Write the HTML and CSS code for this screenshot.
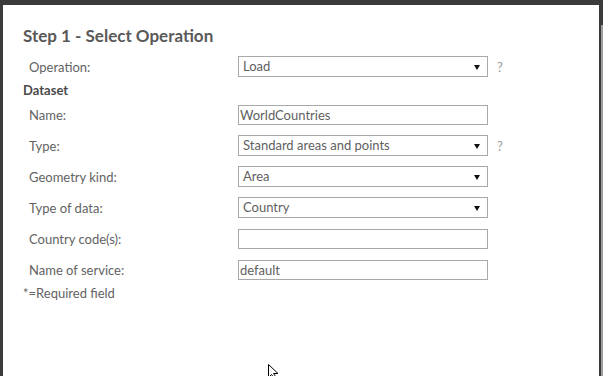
FILE: index.html
```html
<!DOCTYPE html>
<html lang="en">
<head>
    <meta charset="UTF-8">
    <title>Step 1 - Select Operation</title>
    <link rel="stylesheet" href="styles.css">
</head>
<body>
    <div class="frame">
        <div class="dialog">
            <h1 class="title">Step 1 - Select Operation</h1>

            <div class="row">
                <span class="label">Operation:</span>
                <div class="select">Load<span class="arrow"></span></div>
                <span class="help">?</span>
            </div>

            <div class="section">Dataset</div>

            <div class="row">
                <span class="label">Name:</span>
                <div class="input">WorldCountries</div>
            </div>
            <div class="row">
                <span class="label">Type:</span>
                <div class="select">Standard areas and points<span class="arrow"></span></div>
                <span class="help">?</span>
            </div>
            <div class="row">
                <span class="label">Geometry kind:</span>
                <div class="select">Area<span class="arrow"></span></div>
            </div>
            <div class="row">
                <span class="label">Type of data:</span>
                <div class="select">Country<span class="arrow"></span></div>
            </div>
            <div class="row">
                <span class="label">Country code(s):</span>
                <div class="input"></div>
            </div>
            <div class="row">
                <span class="label">Name of service:</span>
                <div class="input">default</div>
            </div>

            <div class="note">*=Required field</div>

            <!-- mouse pointer caught in the screenshot -->
            <svg class="pointer" width="14" height="14" viewBox="0 0 14 14">
                <path d="M0.5 0.5 L0.5 13.5 L3.5 10.5 L6 14 L8 13 L5.5 9.5 L10 9.5 Z" fill="#fff" stroke="#000" stroke-width="1"/>
            </svg>
        </div>
        <div class="edge"></div>
    </div>
</body>
</html>
```

FILE: styles.css
```css
/* Page */
body {
    margin: 0;
    background: #3b3b3b;
    font-family: Lato, 'Liberation Sans', sans-serif;
    color: #636363;
    overflow: hidden;
}

.frame {
    display: flex;
    height: 376px;
    padding-top: 5px;
    box-sizing: border-box;
}

/* Dialog */
.dialog {
    position: relative;
    margin-left: 3px;
    width: 596px;
    background: #fff;
    padding: 21px 0 0 20px;
    box-sizing: border-box;
}

.edge {
    width: 2px;
    margin-left: 2px;
    margin-top: 20px;
    background: #9d9d9d;
}

.title {
    margin: 0 0 5px;
    font-size: 17px;
    line-height: 20px;
    font-weight: bold;
    color: #595959;
}

.section {
    font-size: 13px;
    line-height: 16px;
    font-weight: bold;
    color: #4a4a4a;
    height: 16px;
    margin-bottom: 1px;
}

/* Form rows */
.row {
    display: flex;
    align-items: center;
    height: 31px;
}

.label {
    width: 209px;
    padding-left: 6px;
    font-size: 13px;
}

.select, .input {
    position: relative;
    width: 250px;
    border: 1px solid #a9a9a9;
    box-sizing: border-box;
    font-size: 13px;
    color: #5f5f5f;
}

.select {
    height: 21px;
    line-height: 19px;
    padding-left: 4px;
}

.input {
    height: 20px;
    line-height: 18px;
    padding-left: 1px;
}

.arrow {
    position: absolute;
    right: 7px;
    top: 8px;
    border-left: 3px solid transparent;
    border-right: 3px solid transparent;
    border-top: 5px solid #111;
}

.help {
    margin-left: 9px;
    font-size: 13px;
    color: #9a9a9a;
}

.note {
    font-size: 13px;
    line-height: 16px;
}

.pointer {
    position: absolute;
    left: 265px;
    top: 359px;
}
```
